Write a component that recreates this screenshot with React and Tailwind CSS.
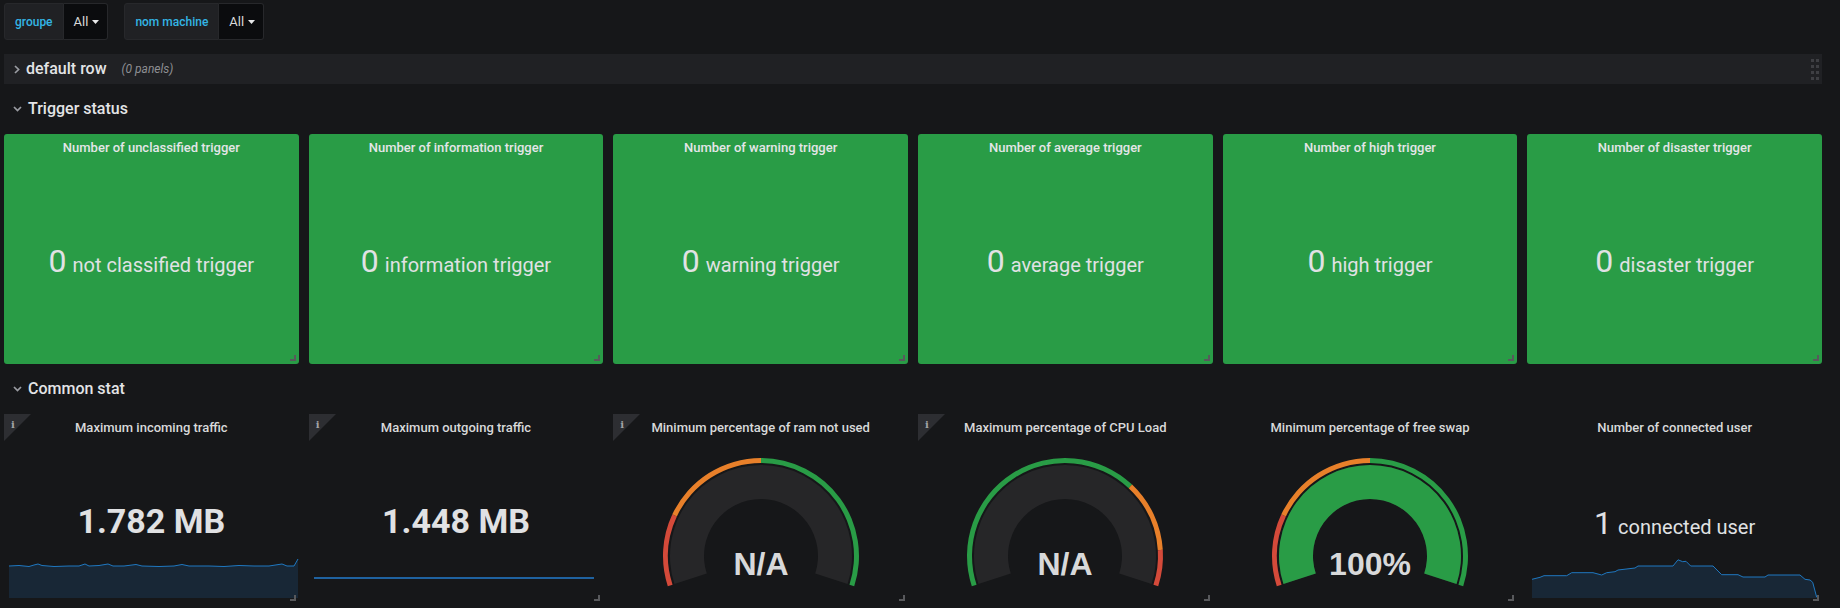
import React from "react";

const pt = (cx, cy, r, deg) => [
  cx + r * Math.cos((deg * Math.PI) / 180),
  cy + r * Math.sin((deg * Math.PI) / 180),
];
function sector(cx, cy, r0, r1, a0, a1) {
  const [x0, y0] = pt(cx, cy, r1, a0);
  const [x1, y1] = pt(cx, cy, r1, a1);
  const [x2, y2] = pt(cx, cy, r0, a1);
  const [x3, y3] = pt(cx, cy, r0, a0);
  const large = a1 - a0 > 180 ? 1 : 0;
  return `M${x0} ${y0} A${r1} ${r1} 0 ${large} 1 ${x1} ${y1} L${x2} ${y2} A${r0} ${r0} 0 ${large} 0 ${x3} ${y3} Z`;
}
const ang = (p) => 162 + (216 * p) / 100;

const RED = "#d44a3a";
const ORANGE = "#e8802a";
const GREEN = "#299c46";

function Gauge({ bands, value, text }) {
  const cx = 105;
  const cy = 100;
  return (
    <svg width="210" height="136" viewBox="0 0 210 136" className="block mx-auto">
      <path d={sector(cx, cy, 57, 91, ang(0), ang(100))} fill="#262628" />
      {value != null && (
        <path d={sector(cx, cy, 57, 91, ang(0), ang(value))} fill={GREEN} />
      )}
      {bands.map(([a, b, c], i) => (
        <path key={i} d={sector(cx, cy, 93, 98, ang(a), ang(b))} fill={c} />
      ))}
      <text
        x={cx}
        y={cy + 18.5}
        textAnchor="middle"
        fontFamily="'Liberation Sans', Arial, sans-serif"
        fontWeight="bold"
        fontSize="32"
        fill="#d8d9da"
      >
        {text}
      </text>
    </svg>
  );
}

function ChevronRight() {
  return (
    <svg width="6" height="9" viewBox="0 0 6 9">
      <path d="M1 1 L4.6 4.5 L1 8" stroke="#9a9ca2" strokeWidth="1.7" fill="none" />
    </svg>
  );
}
function ChevronDown() {
  return (
    <svg width="9" height="6" viewBox="0 0 9 6">
      <path d="M1 1 L4.5 4.6 L8 1" stroke="#9a9ca2" strokeWidth="1.7" fill="none" />
    </svg>
  );
}

function Caret() {
  return (
    <svg width="7" height="4" viewBox="0 0 7 4">
      <path d="M0 0 L7 0 L3.5 4 Z" fill="#e8e9ea" />
    </svg>
  );
}

function VarPicker({ label, value }) {
  return (
    <div className="flex h-[37px]">
      <div className="flex items-center px-[10px] bg-[#202124] border border-[#27282b] rounded-l-[3px] text-[12px] font-medium text-[#33b5e5]">
        {label}
      </div>
      <div className="flex items-center gap-[4px] pl-[10px] pr-[8px] bg-[#0b0c0e] border border-[#27282b] border-l-0 rounded-r-[3px] text-[13px] text-[#d8d9da]">
        <span>{value}</span>
        <Caret />
      </div>
    </div>
  );
}

function ResizeHandle() {
  return (
    <div className="absolute right-[3px] bottom-[3px] w-[6px] h-[6px] border-r-2 border-b-2 border-[#58595c]" />
  );
}

function InfoCorner() {
  return (
    <>
      <div className="absolute left-0 top-0 w-0 h-0 border-t-[27px] border-t-[#2d2e32] border-r-[27px] border-r-transparent" />
      <span className="absolute left-[7px] top-[3px] text-[10px] font-bold text-[#a3a4a7] font-['DejaVu_Serif',serif]">
        i
      </span>
    </>
  );
}

function TriggerPanel({ title, postfix }) {
  return (
    <div className="relative h-[230px] bg-[#299c46] rounded-[3px] flex flex-col">
      <div className="h-[27px] leading-[27px] text-center text-[13px] font-medium text-[#e4e6e8]">
        {title}
      </div>
      <div className="flex-1 flex items-center justify-center pb-[4px]">
        <div className="flex items-baseline text-[#e0e2e4]">
          <span className="text-[32px] leading-none">0</span>
          <span className="text-[20px] leading-none ml-[6px]">{postfix}</span>
        </div>
      </div>
      <ResizeHandle />
    </div>
  );
}

const spark1 = [
  [0, 8], [10, 7.5], [20, 8.5], [25, 7], [29, 6], [33, 7.5], [45, 8.5], [60, 8], [70, 8],
  [76, 6], [80, 8], [90, 7.5], [99, 6], [104, 8], [115, 8], [127, 6.5], [133, 8], [150, 8.5],
  [165, 8], [173, 6.5], [180, 8], [200, 8], [215, 8.5], [230, 7.5], [245, 8], [260, 8],
  [273, 6], [278, 8], [285, 8], [289, 1],
];
const spark6 = [
  [0, 20.3], [8, 18.3], [12, 16.7], [34.7, 16.7], [39.7, 13.7], [61, 13.7], [69.7, 16],
  [74.7, 13.7], [83, 12.7], [86, 11], [103, 9], [106, 7], [141, 7], [146, 0.8], [150.7, 2.7],
  [154, 2.3], [158.7, 7], [181, 7], [189.7, 15.7], [206, 15.7], [211, 18], [233, 18],
  [236, 16], [268, 16], [273, 20.3], [278, 21], [280.7, 23.3], [284.7, 38.3],
];

function Sparkline({ points, w, h }) {
  const line = points.map(([x, y]) => `${x},${y}`).join(" ");
  const last = points[points.length - 1];
  const area = `M0,${h} L${points.map(([x, y]) => `${x},${y}`).join(" L")} L${last[0]},${h} Z`;
  return (
    <svg width={w} height={h} viewBox={`0 0 ${w} ${h}`}>
      <path d={area} fill="#182736" />
      <polyline points={line} fill="none" stroke="#1f78c1" strokeWidth="1" />
    </svg>
  );
}

function StatPanel({ title, info, children, overlay }) {
  return (
    <div className="relative h-[190px] flex flex-col">
      {info && <InfoCorner />}
      {overlay}
      <div className="relative h-[28px] leading-[28px] text-center text-[13px] font-medium text-[#d8d9da]">
        {title}
      </div>
      {children}
      <ResizeHandle />
    </div>
  );
}

function RowHeader({ children }) {
  return (
    <div className="flex items-center h-[30px] pl-[8px]">
      <div className="w-[10px] flex justify-center">
        <ChevronDown />
      </div>
      <span className="ml-[6px] text-[16px] font-medium text-[#e3e4e6]">{children}</span>
    </div>
  );
}

export default function App() {
  const triggers = [
    ["Number of unclassified trigger", "not classified trigger"],
    ["Number of information trigger", "information trigger"],
    ["Number of warning trigger", "warning trigger"],
    ["Number of average trigger", "average trigger"],
    ["Number of high trigger", "high trigger"],
    ["Number of disaster trigger", "disaster trigger"],
  ];
  return (
    <div className="w-[1840px] h-[608px] overflow-hidden bg-[#161719] text-[#d8d9da] font-['Roboto','Liberation_Sans',sans-serif]">
      <div className="flex gap-[16px] pt-[3px] pl-[4px]">
        <VarPicker label="groupe" value="All" />
        <VarPicker label="nom machine" value="All" />
      </div>

      <div className="ml-[4px] w-[1818px] mt-[14px] flex flex-col gap-[10px]">
        <div className="flex items-center h-[30px] pl-[8px] bg-[#202124]">
          <div className="w-[10px] flex justify-center">
            <ChevronRight />
          </div>
          <span className="ml-[4px] text-[16px] font-medium text-[#e3e4e6]">default row</span>
          <span className="ml-[15px] text-[12px] italic text-[#8e8f93]">(0 panels)</span>
          <div className="ml-auto mr-[3px] grid grid-cols-2 gap-x-[2px] gap-y-[3px]">
            {Array.from({ length: 8 }).map((_, i) => (
              <div key={i} className="w-[3px] h-[3px] bg-[#3e3f43]" />
            ))}
          </div>
        </div>

        <RowHeader>Trigger status</RowHeader>

        <div className="grid grid-cols-6 gap-[10px]">
          {triggers.map(([t, p]) => (
            <TriggerPanel key={t} title={t} postfix={p} />
          ))}
        </div>

        <RowHeader>Common stat</RowHeader>

        <div className="grid grid-cols-6 gap-[10px]">
          <StatPanel
            title="Maximum incoming traffic"
            info
            overlay={
              <div className="absolute left-[5px] top-[144px]">
                <Sparkline points={spark1} w={291} h={40} />
              </div>
            }
          >
            <div className="flex-1 flex items-center justify-center pb-[4px]">
              <span className="relative text-[34px] font-bold leading-none text-[#e0e1e3]">1.782 MB</span>
            </div>
          </StatPanel>

          <StatPanel
            title="Maximum outgoing traffic"
            info
            overlay={
              <div className="absolute left-[5px] right-[9px] top-[163px]">
                <svg width="100%" height="2" preserveAspectRatio="none" viewBox="0 0 100 2">
                  <rect x="0" y="0" width="100" height="2" fill="#1f62a0" />
                </svg>
              </div>
            }
          >
            <div className="flex-1 flex items-center justify-center pb-[4px]">
              <span className="relative text-[34px] font-bold leading-none text-[#e0e1e3]">1.448 MB</span>
            </div>
          </StatPanel>

          <StatPanel title="Minimum percentage of ram not used" info>
            <div className="mt-[14px]">
              <Gauge bands={[[0, 20, RED], [20, 50, ORANGE], [50, 100, GREEN]]} value={null} text="N/A" />
            </div>
          </StatPanel>

          <StatPanel title="Maximum percentage of CPU Load" info>
            <div className="mt-[14px]">
              <Gauge bands={[[0, 70, GREEN], [70, 90, ORANGE], [90, 100, RED]]} value={null} text="N/A" />
            </div>
          </StatPanel>

          <StatPanel title="Minimum percentage of free swap">
            <div className="mt-[14px]">
              <Gauge bands={[[0, 20, RED], [20, 50, ORANGE], [50, 100, GREEN]]} value={100} text="100%" />
            </div>
          </StatPanel>

          <StatPanel
            title="Number of connected user"
            overlay={
              <div className="absolute left-[5px] top-[145px]">
                <Sparkline points={spark6} w={285} h={39} />
              </div>
            }
          >
            <div className="flex-1 flex items-center justify-center">
              <div className="relative flex items-baseline text-[#e0e2e4]">
                <span className="text-[32px] leading-none">1</span>
                <span className="text-[20px] leading-none ml-[6px]">connected user</span>
              </div>
            </div>
          </StatPanel>
        </div>
      </div>
    </div>
  );
}
